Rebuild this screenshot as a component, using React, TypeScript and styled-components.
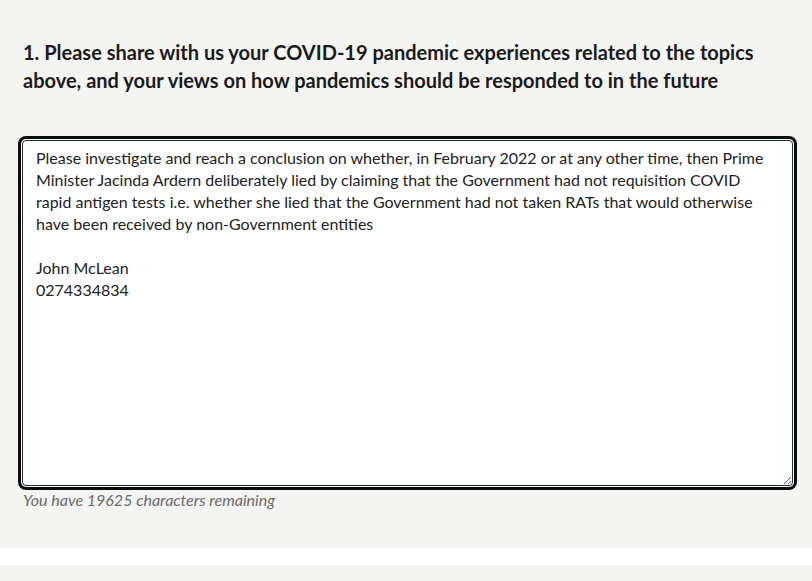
import React from "react";
import styled, { createGlobalStyle } from "styled-components";

const Global = createGlobalStyle`
  html, body { margin: 0; padding: 0; background: #f4f4f2; }
  body { font-family: Lato, "Noto Sans", sans-serif; }
`;

const Page = styled.div`
  display: flex;
  flex-direction: column;
`;

const Section = styled.section`
  background: #f4f4f2;
  padding: 38px 16px 38px 23px;
  display: flex;
  flex-direction: column;
`;

const Question = styled.h2`
  margin: 0 0 46px 0;
  font-family: Lato, sans-serif;
  font-weight: 700;
  font-size: 20px;
  line-height: 28px;
  color: #1b1b1b;
  max-width: 760px;
`;

const Field = styled.textarea`
  box-sizing: border-box;
  width: 771px;
  height: 346px;
  margin-left: -1px;
  padding: 6px 13px;
  border: 1px solid #1d2a4d;
  border-radius: 4px;
  background: #fff;
  box-shadow: 0 0 0 1px #fff, 0 0 0 4px #0b0b0b;
  outline: none;
  resize: vertical;
  font-family: Lato, sans-serif;
  font-size: 16px;
  line-height: 22px;
  color: #222;
`;

const Counter = styled.p`
  margin: 4px 0 0 0;
  font-family: Lato, sans-serif;
  font-style: italic;
  font-size: 16px;
  line-height: 20px;
  color: #6b6b6b;
`;

const Gap = styled.div`
  height: 17px;
  background: #fff;
`;

const Next = styled.section`
  height: 16px;
  background: #f4f4f2;
`;

const text =
  "Please investigate and reach a conclusion on whether, in February 2022 or at any other time, then Prime Minister Jacinda Ardern deliberately lied by claiming that the Government had not requisition COVID rapid antigen tests i.e. whether she lied that the Government had not taken RATs that would otherwise have been received by non-Government entities\n\nJohn McLean\n0274334834";

export default function App() {
  return (
    <Page>
      <Global />
      <Section>
        <Question>
          1. Please share with us your COVID-19 pandemic experiences related to the topics
          above, and your views on how pandemics should be responded to in the future
        </Question>
        <Field defaultValue={text} aria-label="Your response" />
        <Counter>You have 19625 characters remaining</Counter>
      </Section>
      <Gap />
      <Next />
    </Page>
  );
}
